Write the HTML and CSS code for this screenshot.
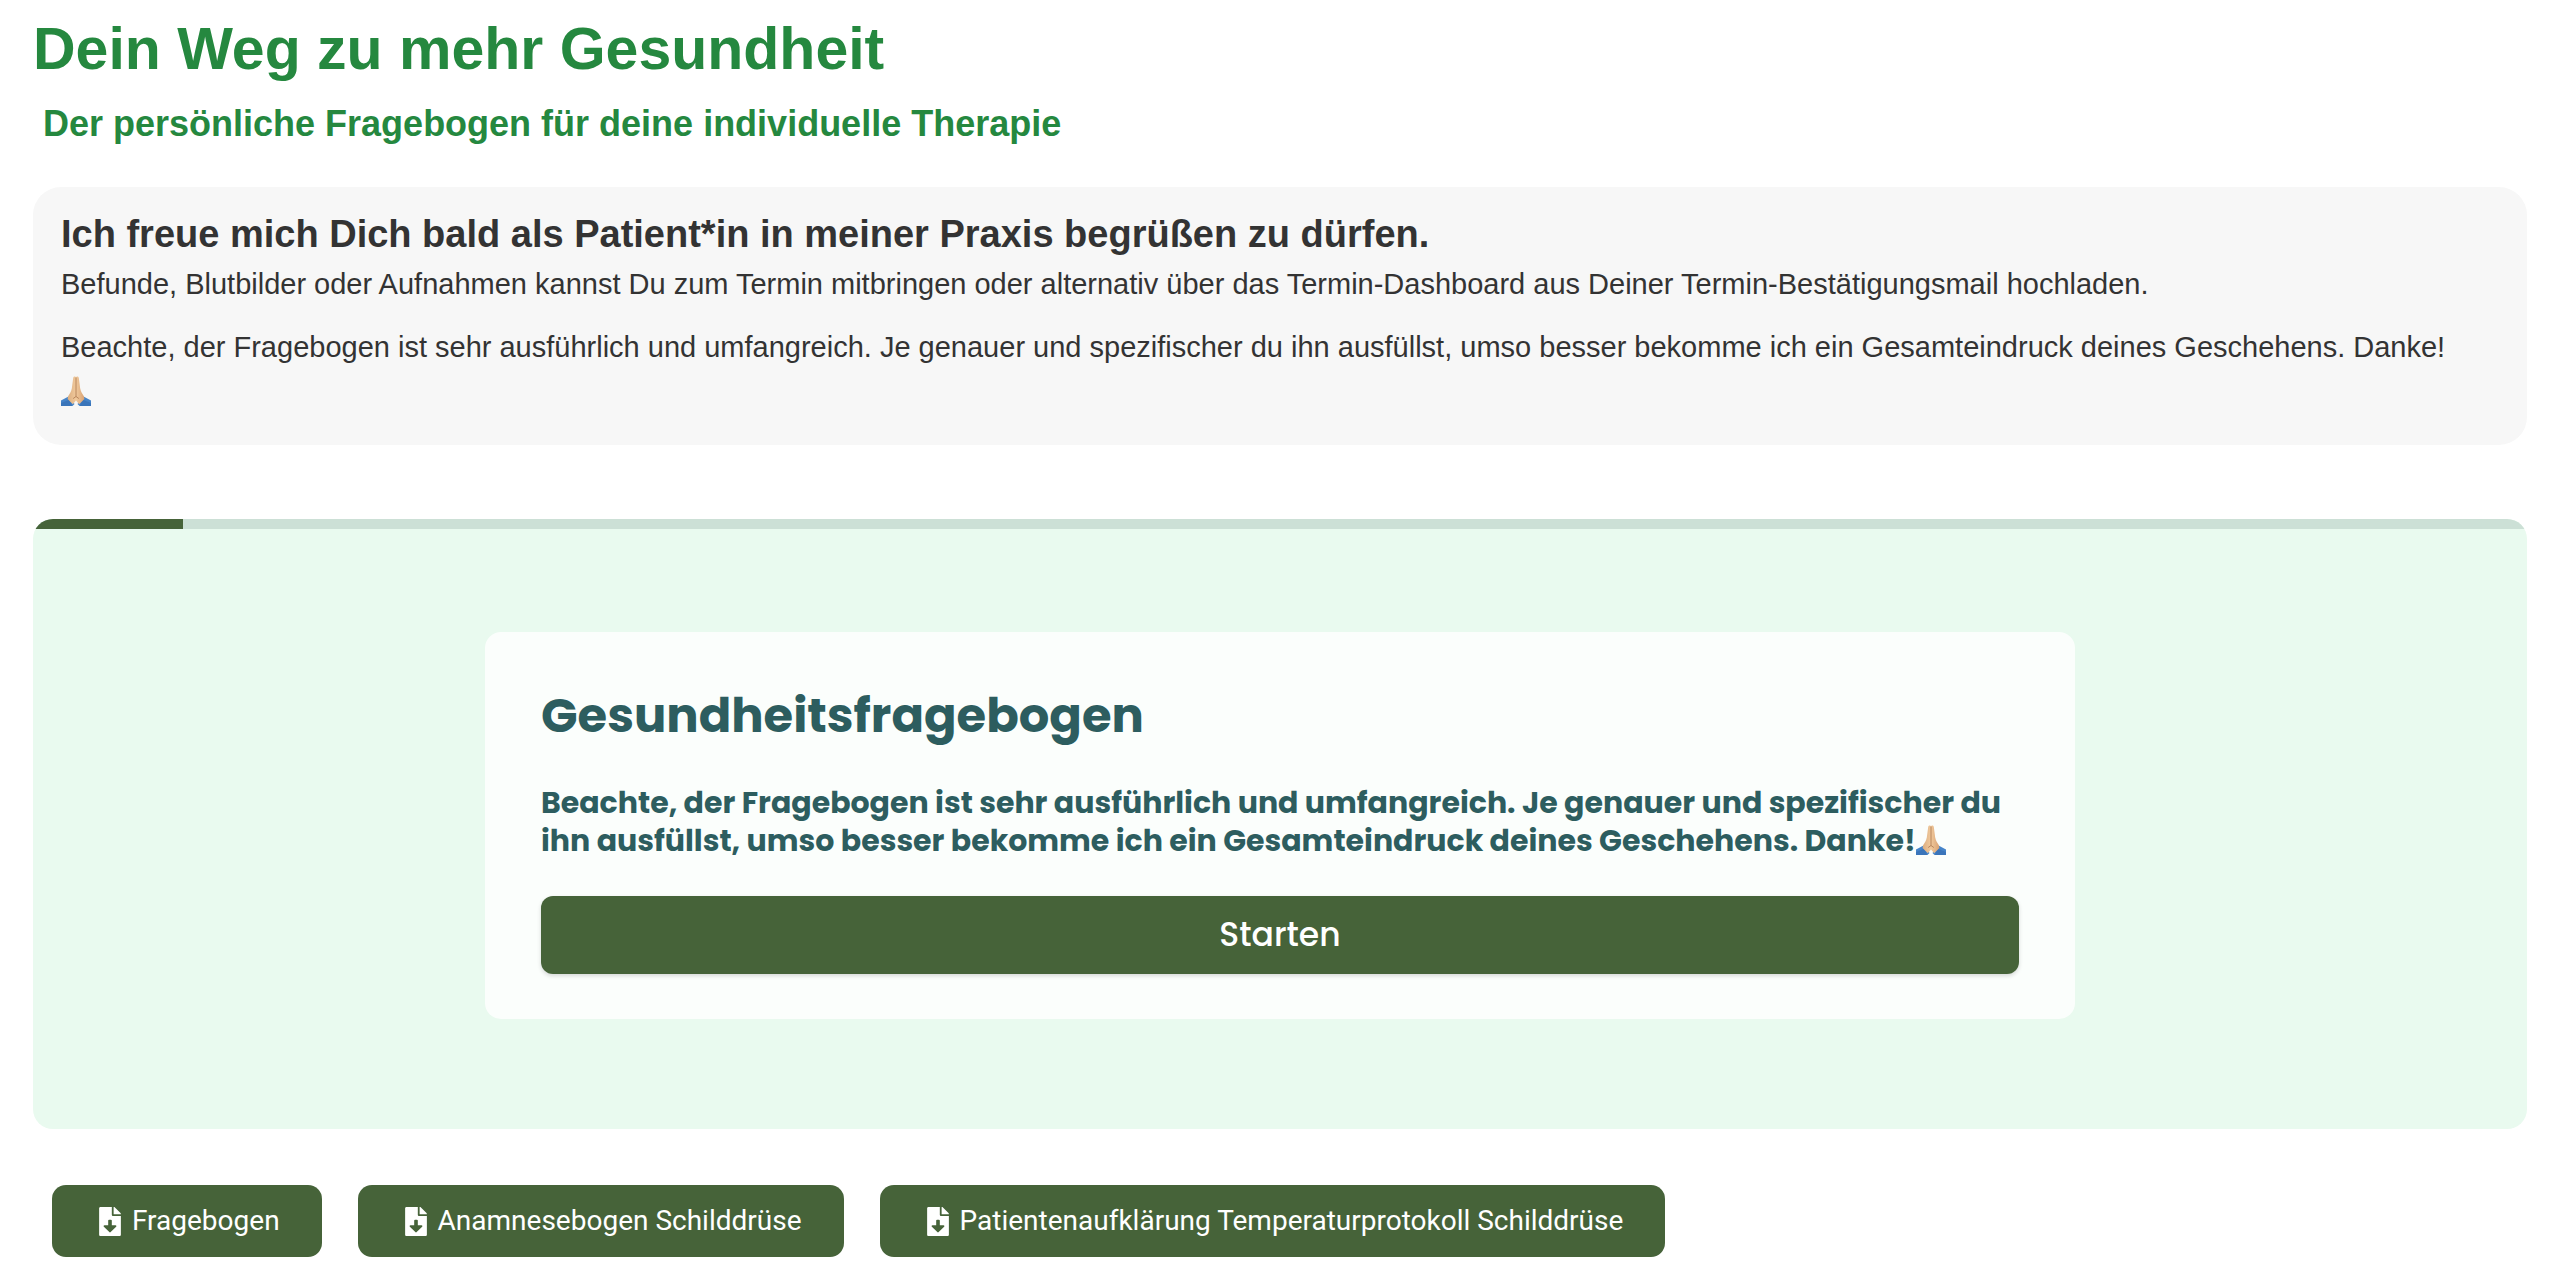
FILE: index.html
```html
<!doctype html>
<html lang="de">
  <head>
    <meta charset="utf-8">
    <title>Dein Weg zu mehr Gesundheit</title>
    <link rel="stylesheet" href="styles.css">
  </head>
  <body>
    <!-- praying hands, used in both notes -->
    <svg class="sprite" aria-hidden="true">
      <defs>
        <linearGradient id="skin" x1="0" x2="1" y1="0" y2="0">
          <stop offset="0" stop-color="#dcae80" />
          <stop offset="0.5" stop-color="#f0c99c" />
          <stop offset="1" stop-color="#d9a273" />
        </linearGradient>
      </defs>
      <symbol id="hands" viewBox="0 0 30 30">
        <path d="M0 24.5 7.5 20.5 13.5 28 11.5 30H0z" fill="#4584c9" />
        <path d="M30 24.5 22.5 20.5 16.5 28 18.5 30H30z" fill="#4584c9" />
        <path d="M0 27 9 23.5 11 30H0zM30 27 21 23.5 19 30H30z" fill="#2f66ac" opacity="0.5" />
        <path d="M15 1.2C14.6.2 12.6.2 12.2 2L10.8 12.5C10.2 16 8.6 17.5 7 20.6L6.6 23 11.8 28.3 15 24.5 18.2 28.3 23.4 23 23 20.6C21.4 17.5 19.8 16 19.2 12.5L17.8 2C17.4.2 15.4.2 15 1.2z" fill="url(#skin)" />
        <path d="M15 1.5V20.5M12.2 22.5 15 20.5 17.8 22.5" fill="none" stroke="#a8744b" stroke-width="0.8" />
      </symbol>
      <symbol id="file-download" viewBox="0 0 384 512">
        <path d="M224 136V0H24C10.700 0 0 10.700 0 24v464c0 13.300 10.700 24 24 24h336c13.300 0 24-10.700 24-24V160H248c-13.200 0-24-10.800-24-24zm76.450 211.360l-96.420 95.700c-6.650 6.610-17.390 6.610-24.040 0l-96.420-95.700C73.420 337.290 80.540 320 94.820 320H160v-80c0-8.840 7.160-16 16-16h32c8.840 0 16 7.160 16 16v80h65.180c14.280 0 21.400 17.290 11.270 27.360zM377 105L279.100 7c-4.500-4.500-10.600-7-17-7H256v128h128v-6.100c0-6.300-2.500-12.400-7-16.900z" fill="currentColor" />
      </symbol>
    </svg>

    <main class="page">
      <h1 class="title">Dein Weg zu mehr Gesundheit</h1>
      <h2 class="subtitle">Der persönliche Fragebogen für deine individuelle Therapie</h2>

      <section class="intro">
        <h3>Ich freue mich Dich bald als Patient*in in meiner Praxis begrüßen zu dürfen.</h3>
        <p>Befunde, Blutbilder oder Aufnahmen kannst Du zum Termin mitbringen oder alternativ über das Termin-Dashboard aus Deiner Termin-Bestätigungsmail hochladen.</p>
        <p>Beachte, der Fragebogen ist sehr ausführlich und umfangreich. Je genauer und spezifischer du ihn ausfüllst, umso besser bekomme ich ein Gesamteindruck deines Geschehens. Danke!<br><svg class="hands"><use href="#hands" /></svg></p>
      </section>

      <section class="survey">
        <div class="progress"><div class="progress-bar" style="width: 6%"></div></div>
        <form class="card">
          <h2>Gesundheitsfragebogen</h2>
          <p>Beachte, der Fragebogen ist sehr ausführlich und umfangreich. Je genauer und spezifischer du ihn ausfüllst, umso besser bekomme ich ein Gesamteindruck deines Geschehens. Danke!<svg class="hands"><use href="#hands" /></svg></p>
          <button type="button" class="start">Starten</button>
        </form>
      </section>

      <nav class="downloads">
        <a href="#fragebogen"><svg class="icon"><use href="#file-download" /></svg>Fragebogen</a>
        <a href="#anamnese"><svg class="icon"><use href="#file-download" /></svg>Anamnesebogen Schilddrüse</a>
        <a href="#temperatur"><svg class="icon"><use href="#file-download" /></svg>Patientenaufklärung Temperaturprotokoll Schilddrüse</a>
      </nav>
    </main>
  </body>
</html>
```
FILE: styles.css
```css
* {
  box-sizing: border-box;
}

body {
  margin: 0;
  background: #fff;
  color: #333;
  font-family: Helvetica, "Liberation Sans", Arial, sans-serif;
}

h1, h2, h3, p {
  margin: 0;
}

.sprite {
  position: absolute;
  width: 0;
  height: 0;
}

.page {
  padding: 13px 33px 20px;
}

.title {
  color: #25883f;
  font-size: 59px;
  line-height: 72px;
}

.subtitle {
  padding: 19px 10px 0;
  color: #25883f;
  font-size: 36px;
  line-height: 40px;
}

.intro {
  margin-top: 43px;
  padding: 24px 28px 30px;
  border-radius: 28px;
  background: #f7f7f7;
}

.intro h3 {
  margin-bottom: 5px;
  font-size: 38px;
  line-height: 46px;
}

.intro p {
  font-size: 29px;
  line-height: 45px;
}

.intro p + p {
  margin-top: 18px;
}

.hands {
  width: 30px;
  height: 30px;
  vertical-align: -4px;
}

.survey {
  margin-top: 74px;
  padding-bottom: 110px;
  border-radius: 20px;
  background: #e9faef;
  overflow: hidden;
}

.progress {
  height: 10px;
  background: #cce0d6;
}

.progress-bar {
  height: 100%;
  background: #466339;
}

.card {
  width: 64%;
  max-width: 1590px;
  margin: 103px auto 0;
  padding: 48px 56px 45px;
  border-radius: 16px;
  background: #fbfefc;
  color: #2d5d5f;
  font-family: Poppins, Inter, sans-serif;
}

.card h2 {
  font-size: 48px;
  line-height: 72px;
}

.card p {
  margin: 32px 0 36px;
  font-size: 30px;
  font-weight: 700;
  line-height: 38px;
}

.start {
  display: block;
  width: 100%;
  padding: 14px;
  border: 0;
  border-radius: 12px;
  background: #466339;
  box-shadow: 0 2px 4px rgba(0, 0, 0, 0.15);
  color: #fff;
  font-family: inherit;
  font-size: 33px;
  font-weight: 500;
  line-height: 50px;
}

.downloads {
  display: flex;
  flex-wrap: wrap;
  gap: 36px;
  margin-top: 56px;
  padding: 0 19px;
}

.downloads a {
  display: flex;
  align-items: center;
  gap: 11px;
  padding: 18px 42px 18px 47px;
  border-radius: 14px;
  background: #466339;
  color: #fff;
  font-family: Roboto, sans-serif;
  font-size: 28px;
  line-height: 36px;
  text-decoration: none;
}

.icon {
  width: 22px;
  height: 29px;
}
```
